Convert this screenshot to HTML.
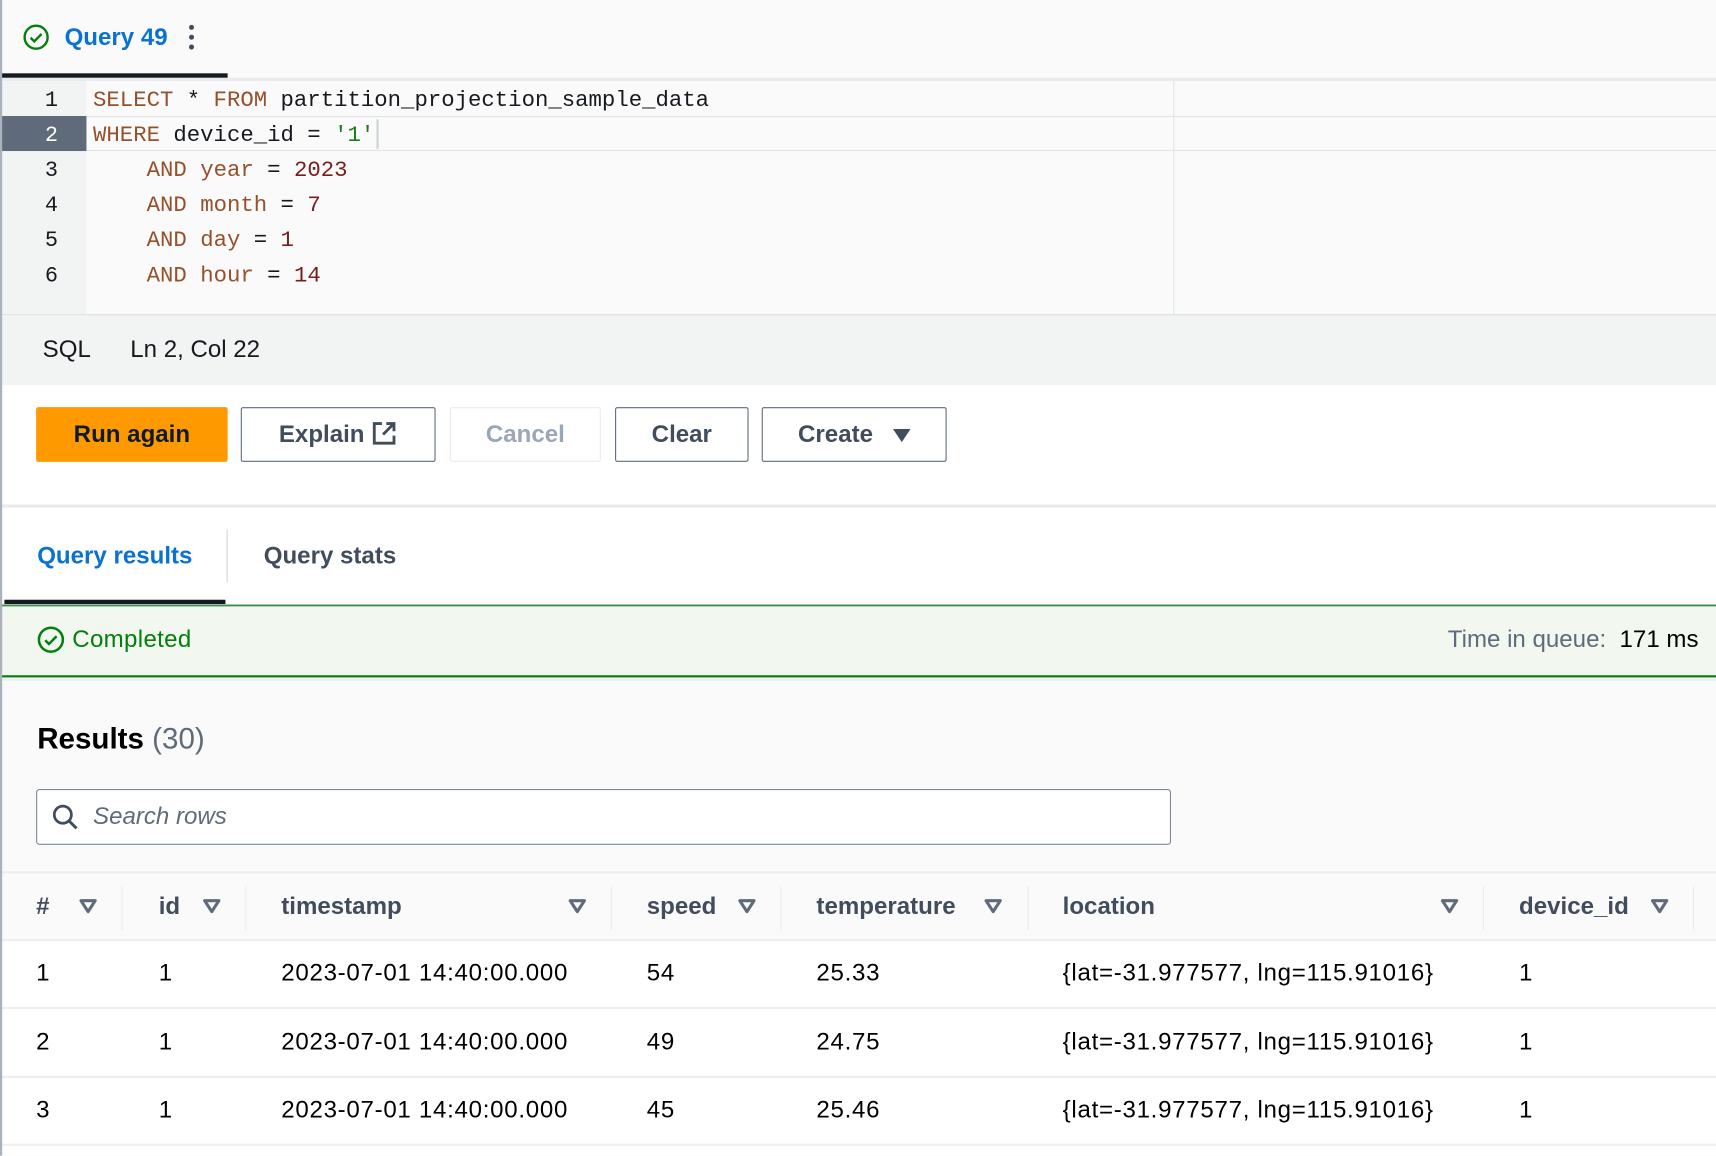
<!DOCTYPE html>
<html><head><meta charset="utf-8">
<style>
html,body{margin:0;padding:0;width:1716px;height:1156px;overflow:hidden;background:#fafafa}
#w{position:absolute;left:0;top:0;width:1568px;height:1056px;transform:scale(1.0944);transform-origin:0 0;font-family:"Liberation Sans",sans-serif;background:#fafafa}
.a{position:absolute}
.mono{font-family:"Liberation Mono",monospace;font-size:20.4px}
.kw{color:#95512b}.num{color:#7a1c1c}.str{color:#1d7a1d}
.ln{position:absolute;left:0;width:94px;text-align:center;font-family:"Liberation Mono",monospace;font-size:20px;color:#16191f;height:32px;line-height:32px}
.code{position:absolute;left:85px;height:32px;line-height:32px;white-space:pre;color:#16191f}
.btn{position:absolute;top:372px;height:50px;box-sizing:border-box;border:1.5px solid #5f6b7a;border-radius:2px;font-weight:bold;font-size:22px;color:#414d5c;text-align:center;line-height:47px;background:#fff}
.th{position:absolute;top:813px;font-weight:bold;font-size:22px;color:#414d5c;line-height:30px}
.si{position:absolute;top:821px}
.sep{position:absolute;top:810px;width:1px;height:40px;background:#e9ebed}
.td{position:absolute;font-size:22px;color:#000;line-height:30px;letter-spacing:0.65px}
.hl{position:absolute;left:0;width:1568px;height:2px;background:#eceef0}
</style></head><body><div id="w">
<!-- tab header -->
<svg class="a" style="left:21px;top:22px" width="24" height="24" viewBox="0 0 24 24"><circle cx="12" cy="12" r="10.5" fill="none" stroke="#037f0c" stroke-width="2.2"/><path d="M7 12.5l3.3 3.3L17 9" fill="none" stroke="#037f0c" stroke-width="2.2"/></svg>
<div class="a" style="left:59px;top:20px;font-size:22px;font-weight:bold;color:#0972d3;line-height:28px">Query 49</div>
<svg class="a" style="left:171px;top:22px" width="8" height="24"><circle cx="4" cy="3" r="2.3" fill="#414d5c"/><circle cx="4" cy="12" r="2.3" fill="#414d5c"/><circle cx="4" cy="21" r="2.3" fill="#414d5c"/></svg>
<div class="a" style="left:0;top:71px;width:1568px;height:3px;background:#e9ebed"></div>
<div class="a" style="left:0;top:67px;width:208px;height:4px;background:#16191f"></div>
<!-- editor -->
<div class="a" style="left:0;top:74px;width:79px;height:213px;background:#f2f3f3"></div>
<div class="a" style="left:0;top:106px;width:79px;height:32px;background:#5f6b7a"></div>
<div class="a" style="left:79px;top:106px;width:1489px;height:1px;background:#e1e4e8"></div>
<div class="a" style="left:79px;top:137px;width:1489px;height:1px;background:#e1e4e8"></div>
<div class="a" style="left:1072px;top:74px;width:1px;height:213px;background:#e1e4e8"></div>
<div class="a" style="left:344px;top:109px;width:2px;height:27px;background:#cfd3d8"></div>
<div class="ln" style="top:77px">1</div>
<div class="ln" style="top:109px;color:#fff">2</div>
<div class="ln" style="top:141px">3</div>
<div class="ln" style="top:173px">4</div>
<div class="ln" style="top:205px">5</div>
<div class="ln" style="top:237px">6</div>
<div class="code mono" style="top:77px"><span class="kw">SELECT</span> * <span class="kw">FROM</span> partition_projection_sample_data</div>
<div class="code mono" style="top:109px"><span class="kw">WHERE</span> device_id = <span class="str">'1'</span></div>
<div class="code mono" style="top:141px">    <span class="kw">AND</span> <span class="kw">year</span> = <span class="num">2023</span></div>
<div class="code mono" style="top:173px">    <span class="kw">AND</span> <span class="kw">month</span> = <span class="num">7</span></div>
<div class="code mono" style="top:205px">    <span class="kw">AND</span> <span class="kw">day</span> = <span class="num">1</span></div>
<div class="code mono" style="top:237px">    <span class="kw">AND</span> <span class="kw">hour</span> = <span class="num">14</span></div>
<!-- status bar -->
<div class="a" style="left:0;top:287px;width:1568px;height:65px;background:#f2f3f3;border-top:1px solid #dfe2e5;box-sizing:border-box"></div>
<div class="a" style="left:39px;top:305px;font-size:22px;color:#16191f;line-height:28px">SQL</div>
<div class="a" style="left:119px;top:305px;font-size:22px;color:#16191f;line-height:28px">Ln 2, Col 22</div>
<!-- buttons area -->
<div class="a" style="left:0;top:352px;width:1568px;height:110px;background:#fff"></div>
<div class="btn" style="left:33px;width:175px;background:#ff9900;border-color:#ff9900;color:#0f1b2a">Run again</div>
<div class="btn" style="left:220px;width:178px">Explain <svg style="vertical-align:-4px" width="24" height="24" viewBox="0 0 24 24"><path d="M10 3H3v18h18v-7" fill="none" stroke="#414d5c" stroke-width="2.6"/><path d="M14 3h7v7M21 3l-10 10" fill="none" stroke="#414d5c" stroke-width="2.6"/></svg></div>
<div class="btn" style="left:411px;width:138px;border-color:#e9ebed;color:#9ba7b6">Cancel</div>
<div class="btn" style="left:562px;width:122px">Clear</div>
<div class="btn" style="left:696px;width:169px">Create <svg style="margin-left:12px;vertical-align:0px" width="16" height="12"><path d="M0 0h16L8 12z" fill="#414d5c"/></svg></div>
<div class="a" style="left:0;top:461px;width:1568px;height:3px;background:#e9ebed"></div>
<!-- tabs -->
<div class="a" style="left:0;top:464px;width:1568px;height:89px;background:#fff"></div>
<div class="a" style="left:34px;top:494px;font-size:22px;font-weight:bold;color:#0972d3;line-height:28px">Query results</div>
<div class="a" style="left:207px;top:484px;width:1px;height:48px;background:#d1d5db"></div>
<div class="a" style="left:241px;top:494px;font-size:22px;font-weight:bold;color:#414d5c;line-height:28px">Query stats</div>
<div class="a" style="left:4px;top:548px;width:202px;height:4px;background:#16191f"></div>
<div class="a" style="left:0;top:552px;width:1568px;height:1px;background:#aab2bb"></div>
<!-- alert -->
<div class="a" style="left:0;top:553px;width:1568px;height:66px;background:#f2f8f0;border-top:1px solid #037f0c;border-bottom:2px solid #037f0c;box-sizing:border-box"></div>
<svg class="a" style="left:34px;top:572px" width="25" height="25" viewBox="0 0 24 24"><circle cx="12" cy="12" r="10.5" fill="none" stroke="#037f0c" stroke-width="2.2"/><path d="M7 12.5l3.3 3.3L17 9" fill="none" stroke="#037f0c" stroke-width="2.2"/></svg>
<div class="a" style="left:66px;top:570px;font-size:22px;color:#037f0c;line-height:28px;letter-spacing:0.3px">Completed</div>
<div class="a" style="right:16px;top:570px;font-size:22px;color:#5f6b7a;line-height:28px;white-space:pre">Time in queue:  <span style="color:#000">171 ms</span></div>
<div class="a" style="left:0;top:620px;width:1568px;height:2px;background:#eceef0"></div>
<!-- results -->
<div class="a" style="left:34px;top:658px;font-size:27px;font-weight:bold;color:#000;line-height:34px">Results <span style="font-weight:normal;color:#5f6b7a">(30)</span></div>
<div class="a" style="left:33px;top:721px;width:1037px;height:51px;background:#fff;border:1.5px solid #7d8998;border-radius:3px;box-sizing:border-box"></div>
<svg class="a" style="left:47px;top:734px" width="25" height="25" viewBox="0 0 24 24"><circle cx="10" cy="10" r="7.5" fill="none" stroke="#414d5c" stroke-width="2.4"/><path d="M15.5 15.5L22 22" stroke="#414d5c" stroke-width="2.6"/></svg>
<div class="a" style="left:85px;top:732px;font-size:22px;font-style:italic;color:#5f6b7a;line-height:28px">Search rows</div>
<!-- table -->
<div class="hl" style="top:796px"></div>
<div class="th" style="left:33px">#</div>
<div class="th" style="left:145px">id</div>
<div class="th" style="left:257px">timestamp</div>
<div class="th" style="left:591px">speed</div>
<div class="th" style="left:746px">temperature</div>
<div class="th" style="left:971px">location</div>
<div class="th" style="left:1388px">device_id</div>
<svg class="si" style="left:72px" width="17" height="14"><path d="M2 2h13L8.5 12z" fill="none" stroke="#5f6b7a" stroke-width="2.8" stroke-linejoin="round"/></svg>
<svg class="si" style="left:185px" width="17" height="14"><path d="M2 2h13L8.5 12z" fill="none" stroke="#5f6b7a" stroke-width="2.8" stroke-linejoin="round"/></svg>
<svg class="si" style="left:519px" width="17" height="14"><path d="M2 2h13L8.5 12z" fill="none" stroke="#5f6b7a" stroke-width="2.8" stroke-linejoin="round"/></svg>
<svg class="si" style="left:674px" width="17" height="14"><path d="M2 2h13L8.5 12z" fill="none" stroke="#5f6b7a" stroke-width="2.8" stroke-linejoin="round"/></svg>
<svg class="si" style="left:899px" width="17" height="14"><path d="M2 2h13L8.5 12z" fill="none" stroke="#5f6b7a" stroke-width="2.8" stroke-linejoin="round"/></svg>
<svg class="si" style="left:1316px" width="17" height="14"><path d="M2 2h13L8.5 12z" fill="none" stroke="#5f6b7a" stroke-width="2.8" stroke-linejoin="round"/></svg>
<svg class="si" style="left:1508px" width="17" height="14"><path d="M2 2h13L8.5 12z" fill="none" stroke="#5f6b7a" stroke-width="2.8" stroke-linejoin="round"/></svg>
<div class="sep" style="left:111px"></div><div class="sep" style="left:224px"></div><div class="sep" style="left:558px"></div><div class="sep" style="left:713px"></div><div class="sep" style="left:939px"></div><div class="sep" style="left:1355px"></div><div class="sep" style="left:1547px"></div>
<div class="a" style="left:0;top:860px;width:1568px;height:196px;background:#fff"></div>
<div class="hl" style="top:858px"></div>
<div class="hl" style="top:920px"></div>
<div class="hl" style="top:983px"></div>
<div class="hl" style="top:1045px"></div>
<div class="td" style="left:33px;top:874px">1</div><div class="td" style="left:145px;top:874px">1</div><div class="td" style="left:257px;top:874px">2023-07-01 14:40:00.000</div><div class="td" style="left:591px;top:874px">54</div><div class="td" style="left:746px;top:874px">25.33</div><div class="td" style="left:971px;top:874px">{lat=-31.977577, lng=115.91016}</div><div class="td" style="left:1388px;top:874px">1</div>
<div class="td" style="left:33px;top:937px">2</div><div class="td" style="left:145px;top:937px">1</div><div class="td" style="left:257px;top:937px">2023-07-01 14:40:00.000</div><div class="td" style="left:591px;top:937px">49</div><div class="td" style="left:746px;top:937px">24.75</div><div class="td" style="left:971px;top:937px">{lat=-31.977577, lng=115.91016}</div><div class="td" style="left:1388px;top:937px">1</div>
<div class="td" style="left:33px;top:999px">3</div><div class="td" style="left:145px;top:999px">1</div><div class="td" style="left:257px;top:999px">2023-07-01 14:40:00.000</div><div class="td" style="left:591px;top:999px">45</div><div class="td" style="left:746px;top:999px">25.46</div><div class="td" style="left:971px;top:999px">{lat=-31.977577, lng=115.91016}</div><div class="td" style="left:1388px;top:999px">1</div>
<div class="a" style="left:0;top:0;width:2px;height:1056px;background:#aab2bb"></div>
</div></body></html>
